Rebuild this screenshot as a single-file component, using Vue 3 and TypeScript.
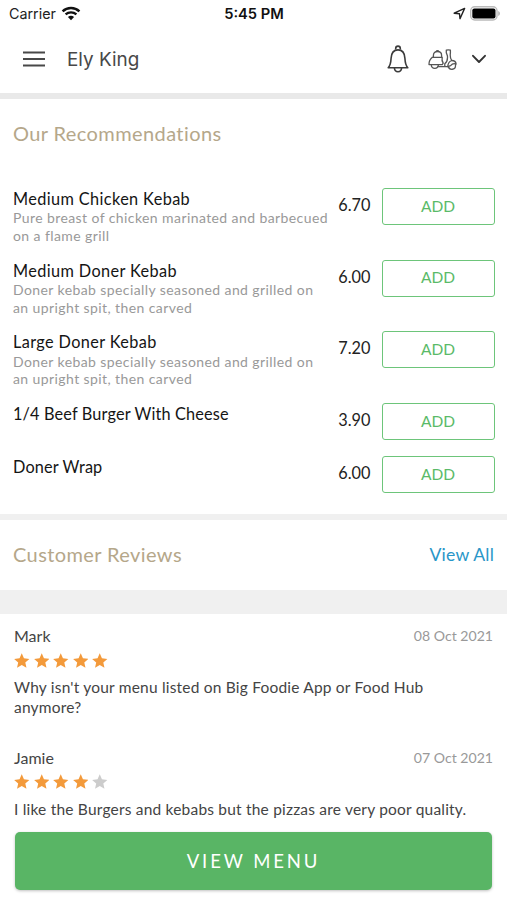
<script setup lang="ts">
interface Dish {
  name: string
  description?: string
  price: string
}

interface Review {
  author: string
  date: string
  rating: number
  text: string
}

const dishes: Dish[] = [
  { name: 'Medium Chicken Kebab', description: 'Pure breast of chicken marinated and barbecued on a flame grill', price: '6.70' },
  { name: 'Medium Doner Kebab', description: 'Doner kebab specially seasoned and grilled on an upright spit, then carved', price: '6.00' },
  { name: 'Large Doner Kebab', description: 'Doner kebab specially seasoned and grilled on an upright spit, then carved', price: '7.20' },
  { name: '1/4 Beef Burger With Cheese', price: '3.90' },
  { name: 'Doner Wrap', price: '6.00' },
]

const reviews: Review[] = [
  { author: 'Mark', date: '08 Oct 2021', rating: 5, text: "Why isn't your menu listed on Big Foodie App or Food Hub anymore?" },
  { author: 'Jamie', date: '07 Oct 2021', rating: 4, text: 'I like the Burgers and kebabs but the pizzas are very poor quality.' },
]
</script>

<template>
  <main class="screen">
    <div class="status">
      <div class="carrier">
        <span>Carrier</span>
        <svg width="20" height="15" viewBox="0 0 20 15">
          <path d="M1.6 5.3C6.3.9 13.7.9 18.4 5.3" fill="none" stroke="#111" stroke-width="2.5" />
          <path d="M4.6 8.4c3-2.8 7.8-2.8 10.8 0" fill="none" stroke="#111" stroke-width="2.3" />
          <path d="M10 14.2 6.9 11c1.7-1.6 4.5-1.6 6.2 0z" fill="#111" />
        </svg>
      </div>
      <span class="clock">5:45 PM</span>
      <div class="indicators">
        <svg width="13" height="13" viewBox="0 0 13 13">
          <path d="M1.2 6.2 11.6 1.4 7 11.7 6.5 6.7z" fill="none" stroke="#222" stroke-width="1.4" stroke-linejoin="round" />
        </svg>
        <svg width="31" height="15" viewBox="0 0 31 15">
          <rect x=".7" y=".7" width="26.3" height="13.3" rx="4" fill="#fff" stroke="#bbb" stroke-width="1.4" />
          <rect x="2.3" y="2.4" width="23.2" height="10" rx="2" fill="#000" />
          <path d="M28.3 5v5c2-.8 2-4.2 0-5z" fill="#aaa" />
        </svg>
      </div>
    </div>

    <header class="bar">
      <svg class="menu" width="22" height="16" viewBox="0 0 22 16">
        <path d="M0 1.5h22M0 8h22M0 14.5h22" stroke="#484848" stroke-width="1.9" />
      </svg>
      <h1>Ely King</h1>
      <svg class="bell" width="22" height="28" viewBox="0 0 22 28" fill="none" stroke="#3c3c3c" stroke-width="1.6" stroke-linejoin="round">
        <path d="M8.7 4.600V3.400a2.300 2.300 0 0 1 4.600 0v1.200" />
        <path d="M1.200 22.800c2.200-2.200 2.600-4.100 2.900-9.500C4.400 7.400 7 4.900 11 4.900s6.600 2.500 6.900 8.400c.3 5.400.7 7.300 2.900 9.500z" />
        <path d="M7.400 23c.2 2.500 1.600 3.700 3.600 3.700s3.400-1.200 3.600-3.700" />
      </svg>
      <svg class="scooter" width="29" height="21" viewBox="0 0 29 21" fill="none" stroke="#555" stroke-width="1.3" stroke-linejoin="round" stroke-linecap="round">
        <path d="M5.400 8.200V6.400C5.400 3.900 7 2.500 9.500 2.500s4.100 1.400 4.100 3.900v1.800M8.400 2.300c.1-1 2.100-1 2.200 0" />
        <path d="M4.300 8.300h9.900M4.300 8.300C2 10.200.9 12.800 1 15.600h13.300l.9-1.400c-1.100-1.800-1.500-3.600-1-5.900" />
        <path d="M3.300 15.600c0 5.100 7.100 5.100 7.100 0" />
        <path d="M10.300 17.700h9.400c.2-3.200 1.500-5.200 4-6.200-1.400-2-1.700-4.700-1.300-7.700V1.200c-1.400-.5-2.700-.5-4.100 0v2.500l1.100 3c.4 3.200-.2 6-2.600 8.100v2.900" />
        <path d="M23.700 11.500c2.600 0 4.200 1.400 4.400 3.600-1.800-.8-4.100-.1-5.500 1.600l-2.900 1" />
        <path d="M20.400 17.500c.8 4 7.100 3.600 7.100-.7v-1.700" />
      </svg>
      <svg class="chevron" width="16" height="10" viewBox="0 0 16 10">
        <path d="M2 1.800 8 8l6-6.200" fill="none" stroke="#333" stroke-width="1.9" stroke-linecap="round" stroke-linejoin="round" />
      </svg>
    </header>

    <section class="recommendations">
      <h2>Our Recommendations</h2>
      <ul class="dishes">
        <li v-for="dish in dishes" :key="dish.name" class="dish" :class="{ short: !dish.description }">
          <div class="info">
            <h3>{{ dish.name }}</h3>
            <p v-if="dish.description">{{ dish.description }}</p>
          </div>
          <span class="price">{{ dish.price }}</span>
          <button class="add" type="button">ADD</button>
        </li>
      </ul>
    </section>

    <section class="reviews-head">
      <h2>Customer Reviews</h2>
      <a class="view-all">View All</a>
    </section>

    <section class="reviews">
      <article v-for="review in reviews" :key="review.author" class="review">
        <div class="meta">
          <span class="author">{{ review.author }}</span>
          <span class="date">{{ review.date }}</span>
        </div>
        <div class="stars">
          <svg v-for="n in 5" :key="n" :class="{ off: n > review.rating }" width="15.5" height="15.5" viewBox="0 0 24 24">
            <path d="M12 .5l3.400 7.800 8.400.8-6.300 5.600 1.800 8.300L12 18.700 4.700 23l1.800-8.300L.2 9.100l8.400-.8z" />
          </svg>
        </div>
        <p>{{ review.text }}</p>
      </article>
    </section>

    <footer class="footer">
      <button class="view-menu" type="button">VIEW MENU</button>
    </footer>
  </main>
</template>

<style>
body {
  background: #fff;
}
</style>

<style scoped>
.screen {
  display: flex;
  flex-direction: column;
  width: 507px;
  height: 900px;
  overflow: hidden;
  background: #fff;
  font-family: Lato, 'Liberation Sans', sans-serif;
  color: #222;
}
h1,
h2,
h3,
p,
ul {
  margin: 0;
  padding: 0;
  font-weight: 400;
}
button {
  font-family: inherit;
  padding: 0;
}
svg {
  display: block;
  flex: none;
}
.status {
  display: grid;
  grid-template-columns: 1fr auto 1fr;
  align-items: center;
  height: 27px;
  padding: 0 6px 0 9px;
  font-family: Inter, sans-serif;
  font-size: 14.3px;
  flex: none;
}
.carrier,
.indicators {
  display: flex;
  align-items: center;
}
.carrier {
  gap: 5px;
}
.indicators {
  justify-content: flex-end;
  gap: 4px;
}
.clock {
  margin-right: 2px;
  font-size: 14.7px;
  font-weight: 600;
  color: #111;
}
.bar {
  display: flex;
  align-items: center;
  box-sizing: border-box;
  height: 72px;
  padding: 0 20px 2px 23px;
  border-bottom: 6px solid #e9e9e9;
  flex: none;
}
.bar h1 {
  flex: 1;
  margin-left: 22px;
  font-family: Inter, sans-serif;
  font-size: 18.9px;
  line-height: 24px;
  padding-top: 1px;
  color: #484848;
}
.scooter {
  margin-left: 19px;
}
.chevron {
  margin-left: 14px;
}
.recommendations {
  box-sizing: border-box;
  height: 421px;
  padding: 21px 12px 0 13px;
  border-bottom: 6px solid #f0f0f0;
  flex: none;
}
h2 {
  font-size: 20px;
  line-height: 26px;
  color: #b5a78a;
  letter-spacing: 0.4px;
}
.dishes {
  list-style: none;
  margin-top: 42px;
}
.dish {
  display: flex;
  align-items: flex-start;
  height: 71.7px;
}
.dish.short {
  height: 53px;
}
.info {
  width: 318px;
}
.info h3 {
  font-size: 16.3px;
  line-height: 22px;
  color: #151515;
  letter-spacing: 0.38px;
}
.dish.short h3 {
  letter-spacing: 0.15px;
}
.info p {
  margin-top: -0.6px;
  font-size: 14px;
  line-height: 17.7px;
  color: #999;
  letter-spacing: 0.41px;
}
.price {
  flex: 1;
  margin-right: 11.5px;
  padding-top: 6px;
  text-align: right;
  font-size: 16.3px;
  line-height: 22px;
  color: #222;
}
.add {
  box-sizing: border-box;
  width: 113px;
  height: 37px;
  padding: 0 1px 2px 0;
  border: 1.5px solid #6dc57a;
  border-radius: 3px;
  background: #fff;
  color: #5aba68;
  font-size: 15.5px;
}
.reviews-head {
  display: flex;
  align-items: center;
  justify-content: space-between;
  box-sizing: border-box;
  height: 94px;
  padding: 0 13px 2px;
  border-bottom: 24px solid #f0f0f0;
  flex: none;
}
.view-all {
  font-size: 17.6px;
  letter-spacing: 0.2px;
  color: #2996c8;
}
.reviews {
  flex: none;
  box-sizing: border-box;
  height: 218px;
  padding: 11px 14px 0;
}
.review {
  height: 121.5px;
}
.meta {
  display: flex;
  justify-content: space-between;
  height: 22px;
  line-height: 22px;
  color: #444;
}
.author {
  font-size: 16px;
}
.date {
  font-size: 14.1px;
  color: #999;
}
.stars {
  display: flex;
  gap: 4px;
  margin-top: 5.5px;
}
.stars svg {
  fill: #f39a3b;
}
.stars svg.off {
  fill: #ccc;
}
.review p {
  width: 465px;
  margin-top: 10px;
  font-size: 15.5px;
  line-height: 19.5px;
  letter-spacing: 0.2px;
  color: #444;
}
.footer {
  height: 68px;
  padding: 0 15px;
  flex: none;
}
.view-menu {
  display: block;
  width: 100%;
  height: 58px;
  padding-bottom: 1px;
  border: 0;
  border-radius: 5px;
  background: #59b565;
  box-shadow: 0 1px 3px rgba(0, 0, 0, 0.25);
  color: #fff;
  font-size: 18.5px;
  letter-spacing: 2.9px;
}
</style>
